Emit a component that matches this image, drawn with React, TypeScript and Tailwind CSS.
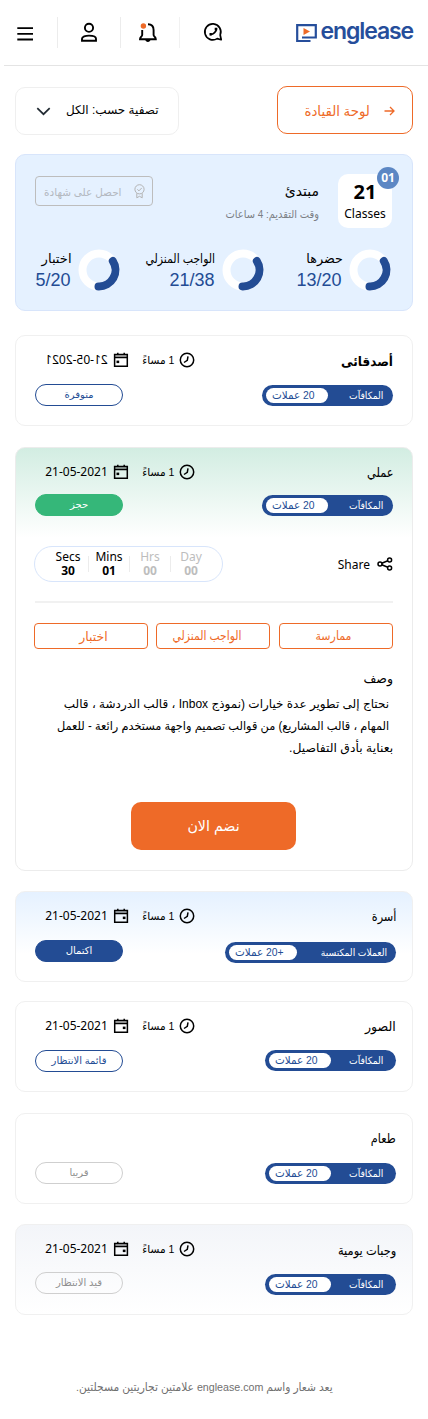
import React from "react";

const AR = "font-['DejaVu_Sans',sans-serif]";
const OS = "font-['Noto_Sans','Open_Sans',sans-serif]";
const HV = "font-['Liberation_Sans','DejaVu_Sans',sans-serif]";

function Ar({ children, className = "" }: { children: React.ReactNode; className?: string }) {
  return (
    <span dir="rtl" className={`block whitespace-nowrap ${HV} ${className}`}>
      {children}
    </span>
  );
}

function Calendar({ flipped = false }: { flipped?: boolean }) {
  return (
    <svg width="16" height="16" viewBox="0 0 16 16" className={flipped ? "-scale-x-100" : ""}>
      <path d="M1.500 2.500h13v3h-13z" fill="#000" fillOpacity="0.25" />
      <path d="M1.700 2.600h12.700v11.600H1.700z M1.700 5.600h12.700 M4.800 2.600V.8 M11.200 2.600V.8" fill="none" stroke="#000" strokeWidth="1.500" />
      <path d="M9.800 8.600h2.700v2.500H9.800z" fill="#000" />
    </svg>
  );
}

function Clock() {
  return (
    <svg width="16" height="16" viewBox="0 0 16 16" fill="none" stroke="#000" strokeWidth="1.500">
      <circle cx="8" cy="8" r="6.700" />
      <path d="M9 4.300 8.300 8.300l-3.300 2.200" />
    </svg>
  );
}

function Donut() {
  return (
    <svg width="42" height="42" viewBox="0 0 42 42" fill="none" strokeWidth="8">
      <circle cx="21" cy="21" r="16.500" stroke="#fff" />
      <path d="M34.800 12A16.500 16.500 0 0 1 20.500 37.500" stroke="#234c94" strokeLinecap="round" />
    </svg>
  );
}

function Stat({ label, value, className = "", labelClass = "" }: { label: string; value: string; className?: string; labelClass?: string }) {
  return (
    <div className={`flex items-start justify-end ${className}`}>
      <div className="flex flex-col items-end">
        <Ar className={`h-5 origin-right text-[12.500px] leading-5 text-black ${labelClass}`}>{label}</Ar>
        <span className={`mr-[1px] h-[22px] text-[18px] leading-[23px] text-[#234c94] ${HV}`}>{value}</span>
      </div>
      <div className="ml-[6px]">
        <Donut />
      </div>
    </div>
  );
}

type Lesson = {
  title: string;
  titleClass: string;
  date: boolean;
  mirrored?: boolean;
  flippedIcon?: boolean;
  status: string;
  statusClass: string;
  statusWrap: string;
  reward: string;
  coins: string;
  rewardClass: string;
  coinsClass: string;
  chipClass: string;
};

function LessonHead({ l }: { l: Lesson }) {
  return (
    <div className="flex h-[75px] items-start justify-between">
      <div className="flex w-[184px] flex-col pl-[19px]">
        <div className="flex h-[32px] items-center pt-[16px]">
          {l.date && (
            <>
              <span className={`ml-[10px] w-[63px] shrink-0 text-center text-[12px] leading-4 whitespace-nowrap text-black ${OS} ${l.mirrored ? "-scale-x-100" : ""}`}>
                21-05-2021
              </span>
              <div className="ml-[5px] shrink-0"><Calendar flipped={l.flippedIcon} /></div>
              <div className="flex w-[45px] shrink-0 justify-end">
                <Ar className="origin-right scale-x-[.96] text-[11px] leading-4 text-black">1 مساءً</Ar>
              </div>
              <div className="ml-[5px] shrink-0"><Clock /></div>
            </>
          )}
        </div>
        <div className={l.statusWrap}>
          <div className={`flex h-[22px] w-[88px] items-center justify-center rounded-full border ${l.statusClass}`}>
            <Ar className="text-[10px] leading-4">{l.status}</Ar>
          </div>
        </div>
      </div>
      <div className={`flex flex-col items-end ${l.rewardClass}`}>
        <Ar className={`h-[32px] origin-right leading-[20px] text-black ${l.titleClass}`}>{l.title}</Ar>
        <div className={`flex h-[21px] items-center justify-between rounded-full bg-[#234c94] pl-1 ${l.coinsClass}`}>
          <div className={`flex h-[15px] items-center rounded-full bg-white pl-[6px] ${l.chipClass}`}>
            <Ar className="origin-left scale-x-[.94] text-[11px] leading-[15px] text-[#234c94]">{l.coins}</Ar>
          </div>
          <Ar className="origin-right scale-x-[.92] text-[10px] leading-[15px] text-white">{l.reward}</Ar>
        </div>
      </div>
    </div>
  );
}

const first: Lesson = {
  title: "أصدقائى", titleClass: "mt-[16px] scale-x-[.93] text-[13px] font-bold", date: true, mirrored: true, flippedIcon: true,
  status: "متوفرة", statusClass: "border-[#234c94] bg-white text-[#234c94]", statusWrap: "mt-[16px]",
  reward: "المكافآت", coins: "20 عملات", rewardClass: "pr-[19px]", coinsClass: "mt-[1px] w-[131px] pr-[10px]", chipClass: "w-[62px]",
};
const second: Lesson = {
  ...first, title: "عملي", titleClass: "mt-[15px] scale-x-[.87] text-[13px]", mirrored: false,
  status: "حجز", statusClass: "border-[#35b779] bg-[#35b779] text-white", statusWrap: "mt-[14px]", coinsClass: "w-[131px] pr-[10px]",
};
const rest: { lesson: Lesson; card: string }[] = [
  {
    card: "mt-5 bg-linear-to-b from-[#e5f1ff] to-white to-70%",
    lesson: {
      ...second, title: "أسرة", flippedIcon: false, status: "اكتمال", statusClass: "border-[#234c94] bg-[#234c94] text-white", statusWrap: "mt-[16px]",
      reward: "العملات المكتسبة", coins: "+20 عملات", rewardClass: "pr-[16px]", coinsClass: "mt-[3px] w-[171px] pr-[9px]", chipClass: "w-[68px]",
    },
  },
  {
    card: "mt-[19px] bg-white",
    lesson: {
      ...second, title: "الصور", titleClass: "mt-[15px] scale-x-[.97] text-[13px]", flippedIcon: false, status: "قائمة الانتظار", statusClass: "border-[#234c94] bg-white text-[#234c94]", statusWrap: "mt-[16px]",
      rewardClass: "pr-[16px]", coinsClass: "mt-[1px] w-[131px] pr-[13px]",
    },
  },
  {
    card: "mt-[21px] bg-white",
    lesson: {
      ...second, title: "طعام", date: false, status: "قريبا", statusClass: "border-[#cfcfcf] bg-white text-[#8f8f8f]", statusWrap: "mt-[15.500px]",
      rewardClass: "pr-[16px]", coinsClass: "mt-[2px] w-[131px] pr-[13px]",
    },
  },
  {
    card: "mt-5 bg-linear-to-b from-[#f3f5f9] to-white",
    lesson: {
      ...second, title: "وجبات يومية", titleClass: "mt-[16px] scale-x-[.88] text-[13px]", flippedIcon: false, status: "قيد الانتظار", statusClass: "border-[#cfcfcf] bg-transparent text-[#8f8f8f]", statusWrap: "mt-[15px]",
      rewardClass: "pr-[16px]", coinsClass: "mt-[1px] w-[131px] pr-[13px]",
    },
  },
];

const units = [
  { name: "Secs", value: "30", tone: "text-black" },
  { name: "Mins", value: "01", tone: "text-black" },
  { name: "Hrs", value: "00", tone: "text-[#bdbdbd]" },
  { name: "Day", value: "00", tone: "text-[#bdbdbd]" },
];

const tabs = [
  { name: "اختبار", box: "", text: "pl-[5px] pt-[2px]" },
  { name: "الواجب المنزلي", box: "ml-2", text: "scale-x-[.86] mr-[12px]" },
  { name: "ممارسة", box: "ml-[9px]", text: "scale-x-[.88] mr-[6px]" },
];

export default function App() {
  return (
    <div className={`flex h-[1419px] w-[428px] flex-col overflow-hidden bg-white ${AR}`}>
      <header className="ml-1 flex h-[66px] shrink-0 items-start border-b border-[#e4e4e4]">
        <svg className="mt-[26px] ml-[13px]" width="16" height="16" viewBox="0 0 16 16" stroke="#000" strokeWidth="1.800">
          <path d="M.3 2.200h15.700M.3 7.800h15.700M.3 13.500h15.700" />
        </svg>
        <div className="mt-[17px] ml-6 h-[31px] w-px bg-[#ececec]" />
        <svg className="mt-[22px] ml-[22px]" width="18" height="21" viewBox="0 0 18 21" fill="none" stroke="#000" strokeWidth="1.900">
          <circle cx="9" cy="5.800" r="4.100" />
          <path d="M2 18.700v-1.900c0-2 3.400-3.200 7-3.200s7 1.200 7 3.200v1.900z" />
        </svg>
        <div className="mt-[17px] ml-[22px] h-[31px] w-px bg-[#ececec]" />
        <svg className="mt-[22px] ml-[17px]" width="20" height="21" viewBox="0 0 20 21" fill="none">
          <path d="M10 2.200c3.600 0 5.600 2.400 5.600 5.800v5c0 1.400 2.200 2.200 2.200 4.200H2c0-2 2.200-2.800 2.200-4.200V8" stroke="#000" strokeWidth="1.900" />
          <path d="M7.300 17.500h5.200c0 3.300-5.200 3.300-5.200 0z" fill="#000" />
          <circle cx="5.400" cy="4" r="2.700" fill="#ee6a28" />
        </svg>
        <div className="mt-[17px] ml-[21px] h-[31px] w-px bg-[#f1f1f1]" />
        <svg className="mt-[22px] ml-[23px]" width="20" height="20" viewBox="0 0 20 20" fill="none" stroke="#000">
          <path d="M14.200 16.600A8 8 0 1 1 17.200 13L18.200 17.700z" strokeWidth="1.700" strokeLinejoin="round" />
          <path d="M13.300 6.400c.5 3-3 6.500-6.300 6" strokeWidth="1.700" />
          <path d="M13 5.800v2.400M6.500 12.200h2.300" strokeWidth="2.600" />
        </svg>
        <svg className="mt-6 ml-[73px] shrink-0" width="21" height="19" viewBox="0 0 21 19" fill="none">
          <path d="M14.500 17H1.200V1.200H19.800v12.300H6" stroke="#264e9b" strokeWidth="2.200" />
          <path d="M7.500 4v7l6.500-3.500z" fill="#ee6a28" />
        </svg>
        <span className="mt-[17px] ml-[3.500px] text-[23px] leading-[28px] font-semibold tracking-[-1.100px] text-[#264e9b] font-['Inter',sans-serif]">englease</span>
      </header>

      <main className="flex flex-col px-[15px]">
        <div className="mt-5 flex h-[48px] justify-between">
          <button className="mt-[1px] flex h-[48px] w-[164px] items-center rounded-[10px] border border-[#efefef] pl-[20px]">
            <svg width="15" height="9" viewBox="0 0 15 9" fill="none" stroke="#222b33" strokeWidth="1.700"><path d="M1.300 1.200 7.500 7.200l6.200-6" /></svg>
            <Ar className="mb-[3px] ml-[15px] text-[12px] leading-5 text-black">تصفية حسب: الكل</Ar>
          </button>
          <button className="flex h-[48px] w-[136px] items-center justify-end rounded-[10px] border border-[#ee6a28] pr-[17px]">
            <Ar className="origin-right scale-x-[.95] pt-[1px] text-[14px] leading-5 text-[#ee6a28]">لوحة القيادة</Ar>
            <svg className="mt-[1px] ml-[14px]" width="11" height="10" viewBox="0 0 11 10" fill="none" stroke="#ee6a28" strokeWidth="1.300"><path d="M.5 5h9.500M6 1l4 4-4 4" /></svg>
          </button>
        </div>

        <section className="mt-5 h-[157px] rounded-[10px] border border-[#d8e5fb] bg-[#e5f1ff]">
          <div className="flex h-[95px] items-start pl-[19px]">
            <div className="mt-[21px] flex h-[30px] w-[118px] items-center justify-end rounded-[4px] border border-[#bdbdbd] pr-[7px]">
              <Ar className="origin-right scale-x-[.95] pt-[1px] text-[11px] leading-4 text-[#b3b8bf]">احصل على شهادة</Ar>
              <svg className="ml-[12px]" width="11" height="15" viewBox="0 0 11 15" fill="none" stroke="#b3b3b3">
                <circle cx="5.500" cy="5.300" r="4.600" />
                <path d="m3.400 5.300 1.500 1.600 2.900-3M2.800 9.300v4.500l2.700-1.500 2.700 1.500V9.300" />
              </svg>
            </div>
            <div className="mt-[24px] flex w-[166px] flex-col items-end">
              <Ar className="text-[14px] leading-6 text-black">مبتدئ</Ar>
              <Ar className="mt-[1px] origin-right scale-x-[.9] text-[11px] leading-5 text-[#7b7f85]">وقت التقديم: 4 ساعات</Ar>
            </div>
            <div className="relative mt-[19px] ml-[19px] flex h-[54px] w-[54px] flex-col items-center rounded-[10px] bg-white">
              <span className={`mt-[5px] text-[20px] leading-[26px] font-bold text-black ${OS}`}>21</span>
              <span className={`text-[12px] leading-[17px] text-black ${OS}`}>Classes</span>
              <span className={`absolute -top-[7px] -right-[7px] flex h-[22px] w-[22px] items-center justify-center rounded-full bg-[#5c87c4] text-[12px] font-bold text-white ${OS}`}>01</span>
            </div>
          </div>
          <div className="-mt-px ml-[.5px] flex">
            <Stat label="اختبار" value="5/20" className="w-[103px]" labelClass="scale-x-[1.05]" />
            <Stat label="الواجب المنزلي" value="21/38" className="w-[144px]" labelClass="scale-x-[.87]" />
            <Stat label="حضرها" value="13/20" className="w-[127px]" labelClass="scale-x-[1.02]" />
          </div>
        </section>

        <section className="mt-6 h-[91px] rounded-[10px] border border-[#f0f0f0]">
          <LessonHead l={first} />
        </section>

        <section className="mt-[21px] h-[424px] rounded-[10px] border border-[#ececec] bg-linear-to-b from-[#d2ede2] to-white to-[90px]">
          <LessonHead l={second} />
          <div className="mt-[23px] flex h-[36px] items-center justify-between pr-[19px] pl-[18px]">
            <div className="flex h-[36px] w-[189px] items-center rounded-full border border-[#d8e5fb] pl-[13px]">
              {units.map((u, i) => (
                <React.Fragment key={u.name}>
                  {i > 0 && <div className="h-4 w-px bg-[#ececec]" />}
                  <div className={`flex w-[40px] flex-col items-center text-[12px] leading-[14px] ${OS} ${u.tone}`}>
                    <span>{u.name}</span>
                    <span className="font-bold">{u.value}</span>
                  </div>
                </React.Fragment>
              ))}
            </div>
            <div className="flex items-center">
              <span className={`mt-[1px] text-[12px] leading-4 text-black ${OS}`}>Share</span>
              <svg className="ml-[7px]" width="16" height="14" viewBox="0 0 16 14" fill="none" stroke="#000" strokeWidth="1.500">
                <circle cx="3" cy="7" r="2" /><circle cx="12.600" cy="3" r="2" /><circle cx="12.600" cy="11" r="2" />
                <path d="m4.800 6.200 6-2.500M4.800 7.800l6 2.500" />
              </svg>
            </div>
          </div>
          <div className="mx-[19px] mt-[19px] h-[2px] bg-[#f1f1f1]" />
          <div className="mt-5 flex pl-[18px]">
            {tabs.map((t) => (
              <button key={t.name} className={`flex h-[26px] w-[114px] items-center justify-center rounded-[4px] border border-[#ee6a28] ${t.box}`}>
                <Ar className={`text-[12.500px] leading-5 text-[#ee6a28] ${t.text}`}>{t.name}</Ar>
              </button>
            ))}
          </div>
          <div className="mt-[19px] flex flex-col items-end pr-[19px]">
            <Ar className="text-[12.500px] leading-[22px] text-black">وصف</Ar>
            <Ar className="mt-[3px] mr-[4px] text-[12px] leading-[22px] text-black">نحتاج إلى تطوير عدة خيارات (نموذج Inbox ، قالب الدردشة ، قالب</Ar>
            <Ar className="mr-[4px] origin-right scale-x-[.946] text-[12px] leading-[22px] text-black">المهام ، قالب المشاريع) من قوالب تصميم واجهة مستخدم رائعة - للعمل</Ar>
            <Ar className="origin-right scale-x-[1.030] text-[12px] leading-[22px] text-black">بعناية بأدق التفاصيل.</Ar>
          </div>
          <button className="mt-[43px] ml-[115px] flex h-[48px] w-[165px] items-center justify-center rounded-[10px] bg-[#ee6a28]">
            <Ar className="scale-x-[.95] text-[15px] leading-6 text-white">نضم الان</Ar>
          </button>
        </section>

        {rest.map(({ lesson, card }) => (
          <section key={lesson.title} className={`h-[91px] rounded-[10px] border border-[#f0f0f0] ${card}`}>
            <LessonHead l={lesson} />
          </section>
        ))}
      </main>

      <footer className="mt-[62px] flex pl-[76px]">
        <Ar className="origin-left scale-x-[.928] text-[11.500px] leading-5 text-[#707070]">يعد شعار واسم englease.com علامتين تجاريتين مسجلتين.</Ar>
      </footer>
    </div>
  );
}
